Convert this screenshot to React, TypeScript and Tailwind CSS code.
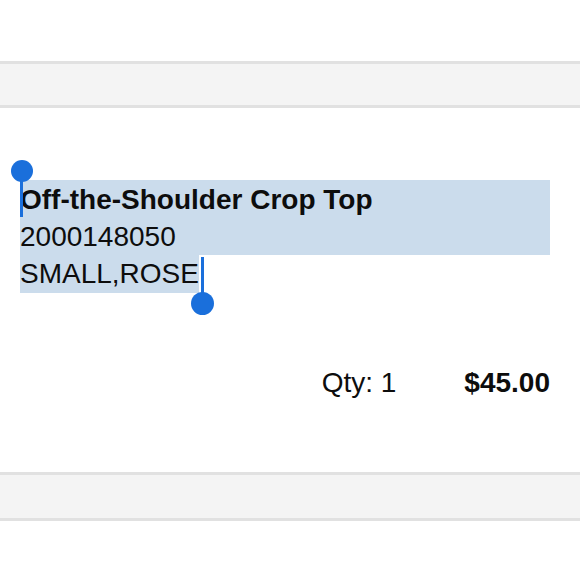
export default function App() {
  return (
    <div className="h-[580px] overflow-hidden bg-white font-['Liberation_Sans',Arial,sans-serif] text-[#0d0d0d]">
      <div className="h-[61px]" />
      <div className="h-[47px] border-y-[3px] border-[#e1e1e1] bg-[#f4f4f4]" />

      <div className="h-[364px] pl-5 pr-[30px] pt-[72px]">
        {/* item details, shown as a text selection */}
        <div className="relative text-[28px]">
          <div className="bg-[#cbdcec]">
            <div className="pt-[3px] font-bold leading-[34.7px]">Off-the-Shoulder Crop Top</div>
            <div className="pt-[1px] leading-[36.7px]">2000148050</div>
          </div>
          <div className="flex">
            <span className="bg-[#cbdcec] pt-[1px] leading-[36.7px]">SMALL,ROSE</span>
          </div>

          <span className="absolute left-0 top-[-9px] h-[46px] w-[3px] bg-[#1a6fdb]" />
          <span className="absolute left-[-9px] top-[-20px] h-[22px] w-[22px] rounded-full bg-[#1a6fdb]" />
          <span className="absolute left-[181px] top-[77px] h-[46px] w-[3px] bg-[#1a6fdb]" />
          <span className="absolute left-[171px] top-[112px] h-[23px] w-[23px] rounded-full bg-[#1a6fdb]" />
        </div>

        <div className="mt-[71px] flex justify-end gap-[68px] text-[28px] leading-[37.7px]">
          <span>Qty: 1</span>
          <span className="font-bold">$45.00</span>
        </div>
      </div>

      <div className="h-[49px] border-y-[3px] border-[#e1e1e1] bg-[#f4f4f4]" />
    </div>
  );
}
